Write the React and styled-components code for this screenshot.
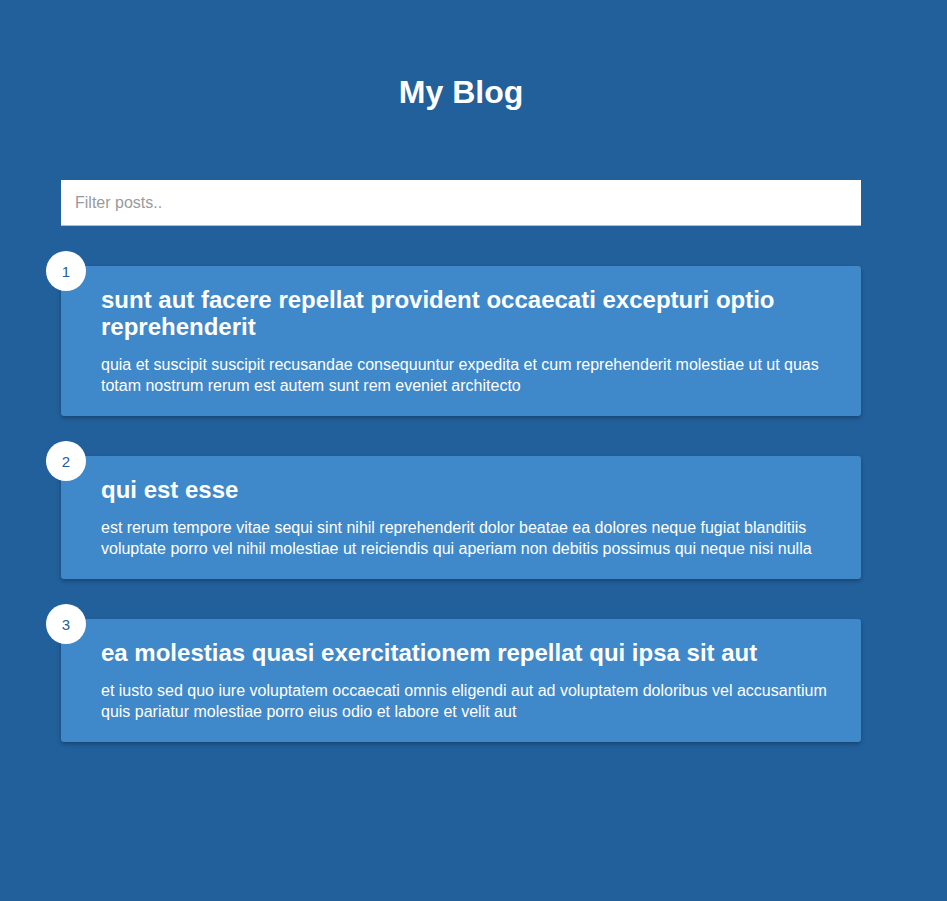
import styled, { createGlobalStyle } from 'styled-components';

const GlobalStyle = createGlobalStyle`
    body {
        margin: 0;
        background-color: #22609c;
        color: #fff;
        font-family: "Liberation Sans", Arial, sans-serif;
    }
`

const Page = styled.div`
    width: 800px;
    margin-left: 61px;
    padding-bottom: 100px;
`

const Title = styled.h1`
    margin: 74px 0 0;
    font-size: 32px;
    line-height: 37px;
    text-align: center;
`

const Filter = styled.input`
    display: block;
    box-sizing: border-box;
    width: 100%;
    height: 46px;
    margin-top: 69px;
    padding: 12px 14px;
    border: none;
    box-shadow: inset 0 -1px 0 #bcbcbc;
    font-family: inherit;
    font-size: 16px;
    outline: none;

    &::placeholder {
        color: #9a9a9a;
    }
`

const Post = styled.div`
    position: relative;
    display: flex;
    box-sizing: border-box;
    margin: 40px 0;
    padding: 20px;
    background-color: #3f88c9;
    border-radius: 3px;
    box-shadow: 0 2px 4px rgba(0, 0, 0, 0.3);
`

const Number = styled.div`
    position: absolute;
    top: -15px;
    left: -15px;
    display: flex;
    align-items: center;
    justify-content: center;
    width: 40px;
    height: 40px;
    border-radius: 50%;
    background: #fff;
    color: #22609c;
    font-size: 15px;
`

const Info = styled.div`
    margin-left: 20px;
`

const PostTitle = styled.h2`
    margin: 0;
    font-size: 24px;
    line-height: 27px;
`

const PostBody = styled.p`
    margin: 15px 0 0;
    font-size: 16px;
    line-height: 20.5px;
`

const posts = [
    {
        id: 1,
        title: 'sunt aut facere repellat provident occaecati excepturi optio reprehenderit',
        body: 'quia et suscipit suscipit recusandae consequuntur expedita et cum reprehenderit molestiae ut ut quas totam nostrum rerum est autem sunt rem eveniet architecto',
    },
    {
        id: 2,
        title: 'qui est esse',
        body: 'est rerum tempore vitae sequi sint nihil reprehenderit dolor beatae ea dolores neque fugiat blanditiis voluptate porro vel nihil molestiae ut reiciendis qui aperiam non debitis possimus qui neque nisi nulla',
    },
    {
        id: 3,
        title: 'ea molestias quasi exercitationem repellat qui ipsa sit aut',
        body: 'et iusto sed quo iure voluptatem occaecati omnis eligendi aut ad voluptatem doloribus vel accusantium quis pariatur molestiae porro eius odio et labore et velit aut',
    },
]

const App = () => {
    return (
        <Page>
            <GlobalStyle />
            <Title>My Blog</Title>
            <Filter type="text" placeholder="Filter posts.." />
            {posts.map((post) => (
                <Post key={post.id}>
                    <Number>{post.id}</Number>
                    <Info>
                        <PostTitle>{post.title}</PostTitle>
                        <PostBody>{post.body}</PostBody>
                    </Info>
                </Post>
            ))}
        </Page>
    );
}

export default App;
